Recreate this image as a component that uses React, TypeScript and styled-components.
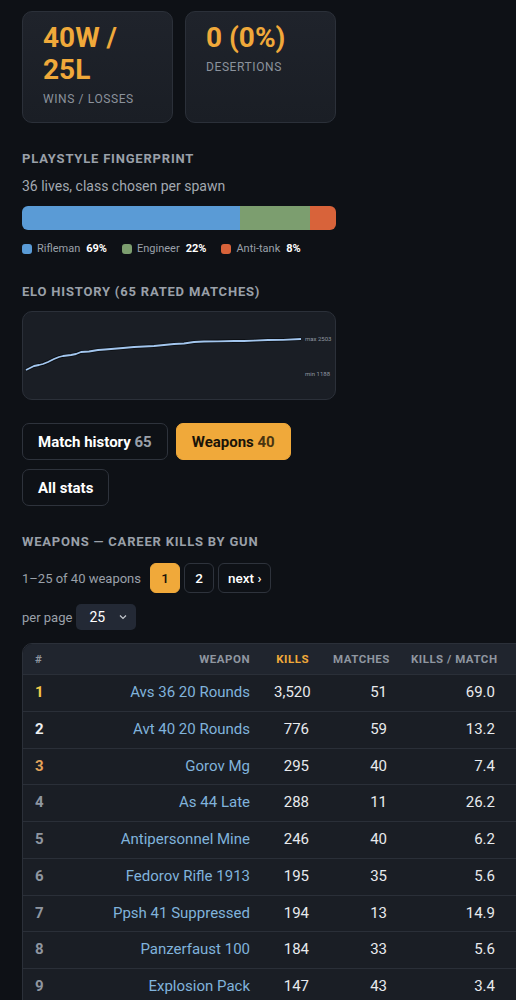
import React from 'react';
import styled, { createGlobalStyle } from 'styled-components';

const GlobalStyle = createGlobalStyle`
  html, body {
    margin: 0;
    padding: 0;
    background: #0e1116;
    overflow-x: hidden;
  }
  body {
    font-family: Roboto, "Noto Sans", "Liberation Sans", sans-serif;
    color: #e6e8eb;
  }
`;

const ORANGE = '#f0a93a';

const Page = styled.div`
  padding: 11px 22px 40px;
  width: 314px;
`;

const StatGrid = styled.div`
  display: grid;
  grid-template-columns: 1fr 1fr;
  gap: 12px;
`;

const StatCard = styled.div`
  background: linear-gradient(180deg, #1f232b 0%, #1a1e25 100%);
  border: 1px solid #2b3039;
  border-radius: 10px;
  padding: 10px 20px 15px;
`;

const StatValue = styled.div`
  font-size: 28px;
  font-weight: 700;
  line-height: 32px;
  color: ${ORANGE};
`;

const StatLabel = styled.div`
  margin-top: 5px;
  font-size: 12px;
  line-height: 16px;
  letter-spacing: 0.6px;
  text-transform: uppercase;
  color: #8b929c;
`;

const SectionTitle = styled.div<{ $top: number }>`
  margin-top: ${p => p.$top}px;
  font-size: 13px;
  line-height: 16px;
  font-weight: 700;
  letter-spacing: 0.8px;
  text-transform: uppercase;
  color: #9aa0a9;
`;

const Subtitle = styled.div`
  margin-top: 9px;
  font-size: 14px;
  line-height: 20px;
  color: #a3a9b1;
`;

const Bar = styled.div`
  margin-top: 10px;
  display: flex;
  height: 24px;
  border-radius: 6px;
  overflow: hidden;
`;

const BarSegment = styled.div<{ $color: string; $grow: number }>`
  flex: ${p => p.$grow} 1 0;
  background: ${p => p.$color};
`;

const Legend = styled.div`
  margin-top: 11px;
  display: flex;
  gap: 15px;
  font-size: 11px;
  line-height: 16px;
  color: #9aa0a9;
`;

const LegendItem = styled.div`
  display: flex;
  align-items: center;
  gap: 5px;
  b {
    color: #ffffff;
    font-weight: 700;
    margin-left: 1px;
  }
`;

const Swatch = styled.span<{ $color: string }>`
  width: 10px;
  height: 10px;
  border-radius: 3px;
  background: ${p => p.$color};
`;

const ChartBox = styled.div`
  margin-top: 11px;
  height: 87px;
  background: #1a1e25;
  border: 1px solid #2b3039;
  border-radius: 10px;
  overflow: hidden;
`;

const Tabs = styled.div`
  margin-top: 23px;
  display: flex;
  flex-wrap: wrap;
  gap: 9px 8px;
`;

const Tab = styled.button<{ $active?: boolean }>`
  height: 37px;
  padding: 0 15px;
  border-radius: 7px;
  font-family: inherit;
  font-size: 15px;
  font-weight: 700;
  cursor: pointer;
  border: 1px solid ${p => (p.$active ? ORANGE : '#2e333c')};
  background: ${p => (p.$active ? ORANGE : 'transparent')};
  color: ${p => (p.$active ? '#1a1408' : '#ffffff')};
  span {
    color: ${p => (p.$active ? '#4a3510' : '#9aa0a9')};
  }
`;

const PagerRow = styled.div`
  margin-top: 13px;
  display: flex;
  align-items: center;
  gap: 4px;
  font-size: 13px;
  color: #9aa0a9;
`;

const PagerInfo = styled.span`
  margin-right: 5px;
`;

const PageButton = styled.button<{ $active?: boolean }>`
  height: 30px;
  min-width: 30px;
  padding: 0 9px;
  border-radius: 6px;
  font-family: inherit;
  font-size: 13.5px;
  font-weight: 500;
  border: 1px solid ${p => (p.$active ? ORANGE : '#2e333c')};
  background: ${p => (p.$active ? ORANGE : 'transparent')};
  color: ${p => (p.$active ? '#1a1408' : '#ffffff')};
`;

const PerPageRow = styled.div`
  margin-top: 11px;
  display: flex;
  align-items: center;
  gap: 4px;
  font-size: 13px;
  color: #9aa0a9;
`;

const SelectBox = styled.div`
  width: 60px;
  height: 26px;
  box-sizing: border-box;
  padding: 0 8px 0 13px;
  display: flex;
  align-items: center;
  justify-content: space-between;
  background: #232935;
  border-radius: 5px;
  color: #ffffff;
  font-size: 14px;
`;

const TableWrap = styled.div`
  margin-top: 13px;
  width: 570px;
  border: 1px solid #2b3039;
  border-radius: 10px;
  overflow: hidden;
`;

const Table = styled.table`
  width: 100%;
  table-layout: fixed;
  border-collapse: separate;
  border-spacing: 0;
`;

const Th = styled.th<{ $align?: string; $sorted?: boolean }>`
  padding: 8px 12px;
  line-height: 14px;
  font-size: 11.5px;
  font-weight: 700;
  letter-spacing: 0.5px;
  text-transform: uppercase;
  white-space: nowrap;
  text-align: ${p => p.$align ?? 'right'};
  color: ${p => (p.$sorted ? ORANGE : '#8f96a0')};
  background: #20252e;
`;

const Td = styled.td<{ $align?: string }>`
  padding: 9px 12px;
  line-height: 17.75px;
  font-size: 15px;
  text-align: ${p => p.$align ?? 'right'};
  color: #e8eaed;
  background: #1a1e25;
  border-top: 1px solid #2a2f38;
  white-space: nowrap;
`;

const RankCell = styled(Td)<{ $rank: number }>`
  font-weight: 700;
  color: ${p =>
    p.$rank === 1 ? '#f3cb4a' : p.$rank === 2 ? '#eceef0' : p.$rank === 3 ? '#e2a35a' : '#8f96a0'};
`;

const WeaponLink = styled.a`
  color: #80b3dc;
  text-decoration: none;
`;

const weapons = [
  { name: 'Avs 36 20 Rounds', kills: '3,520', matches: 51, kpm: '69.0' },
  { name: 'Avt 40 20 Rounds', kills: '776', matches: 59, kpm: '13.2' },
  { name: 'Gorov Mg', kills: '295', matches: 40, kpm: '7.4' },
  { name: 'As 44 Late', kills: '288', matches: 11, kpm: '26.2' },
  { name: 'Antipersonnel Mine', kills: '246', matches: 40, kpm: '6.2' },
  { name: 'Fedorov Rifle 1913', kills: '195', matches: 35, kpm: '5.6' },
  { name: 'Ppsh 41 Suppressed', kills: '194', matches: 13, kpm: '14.9' },
  { name: 'Panzerfaust 100', kills: '184', matches: 33, kpm: '5.6' },
  { name: 'Explosion Pack', kills: '147', matches: 43, kpm: '3.4' },
  { name: 'Ppsh 41', kills: '131', matches: 22, kpm: '6.0' },
];

// elo curve, local coords of the chart box (313 x 87)
const eloPoints: [number, number][] = [
  [3, 58], [7, 56], [11, 54], [16, 53], [20, 52], [25, 50], [31, 47], [36, 45],
  [40, 44], [44, 43.5], [48, 43], [53, 42], [58, 40], [66, 39.5], [75, 38],
  [82, 37.5], [88, 37], [100, 36], [111, 35], [121, 34.5], [131, 34], [141, 33],
  [151, 32], [161, 31.5], [171, 30], [181, 29.5], [195, 29.3], [211, 29],
  [221, 29], [231, 28.6], [245, 28], [260, 27.8], [278, 27],
];

function EloChart() {
  const d = eloPoints.map(([x, y], i) => `${i ? 'L' : 'M'}${x} ${y}`).join(' ');
  return (
    <svg width="313" height="87" viewBox="0 0 313 87">
      <path d={d} fill="none" stroke="#0a0d11" strokeWidth="3.6" strokeLinejoin="round" />
      <path d={d} fill="none" stroke="#a3c6ee" strokeWidth="1.8" strokeLinejoin="round" />
      <text x="282" y="29" fontSize="6" fill="#8f96a0" fontFamily="Roboto, sans-serif">max 2503</text>
      <text x="282" y="64" fontSize="6" fill="#8f96a0" fontFamily="Roboto, sans-serif">min 1188</text>
    </svg>
  );
}

export default function App() {
  return (
    <Page>
      <GlobalStyle />
      <StatGrid>
        <StatCard>
          <StatValue>40W / 25L</StatValue>
          <StatLabel>Wins / Losses</StatLabel>
        </StatCard>
        <StatCard>
          <StatValue>0 (0%)</StatValue>
          <StatLabel>Desertions</StatLabel>
        </StatCard>
      </StatGrid>

      <SectionTitle $top={28}>Playstyle fingerprint</SectionTitle>
      <Subtitle>36 lives, class chosen per spawn</Subtitle>
      <Bar>
        <BarSegment $color="#5a9bd6" $grow={69.3} />
        <BarSegment $color="#7c9e6f" $grow={22.4} />
        <BarSegment $color="#d8633a" $grow={8.3} />
      </Bar>
      <Legend>
        <LegendItem><Swatch $color="#5a9bd6" />Rifleman <b>69%</b></LegendItem>
        <LegendItem><Swatch $color="#7c9e6f" />Engineer <b>22%</b></LegendItem>
        <LegendItem><Swatch $color="#d8633a" />Anti-tank <b>8%</b></LegendItem>
      </Legend>

      <SectionTitle $top={27}>ELO history (65 rated matches)</SectionTitle>
      <ChartBox>
        <EloChart />
      </ChartBox>

      <Tabs>
        <Tab>Match history <span>65</span></Tab>
        <Tab $active>Weapons <span>40</span></Tab>
        <Tab>All stats</Tab>
      </Tabs>

      <SectionTitle $top={28}>Weapons — career kills by gun</SectionTitle>
      <PagerRow>
        <PagerInfo>1–25 of 40 weapons</PagerInfo>
        <PageButton $active>1</PageButton>
        <PageButton>2</PageButton>
        <PageButton>next ›</PageButton>
      </PagerRow>
      <PerPageRow>
        per page
        <SelectBox>
          25
          <svg width="10" height="10" viewBox="0 0 10 10">
            <path d="M2 3.5 L5 6.5 L8 3.5" fill="none" stroke="#c4c8ce" strokeWidth="1.2" />
          </svg>
        </SelectBox>
      </PerPageRow>

      <TableWrap>
        <Table>
          <colgroup>
            <col style={{ width: 60 }} />
            <col style={{ width: 179 }} />
            <col style={{ width: 59 }} />
            <col style={{ width: 78 }} />
            <col style={{ width: 108 }} />
            <col />
          </colgroup>
          <thead>
            <tr>
              <Th $align="left">#</Th>
              <Th>Weapon</Th>
              <Th $sorted>Kills</Th>
              <Th>Matches</Th>
              <Th>Kills / Match</Th>
              <Th>Share</Th>
            </tr>
          </thead>
          <tbody>
            {weapons.map((w, i) => (
              <tr key={w.name}>
                <RankCell $align="left" $rank={i + 1}>{i + 1}</RankCell>
                <Td><WeaponLink href="#">{w.name}</WeaponLink></Td>
                <Td>{w.kills}</Td>
                <Td>{w.matches}</Td>
                <Td>{w.kpm}</Td>
                <Td></Td>
              </tr>
            ))}
          </tbody>
        </Table>
      </TableWrap>
    </Page>
  );
}
